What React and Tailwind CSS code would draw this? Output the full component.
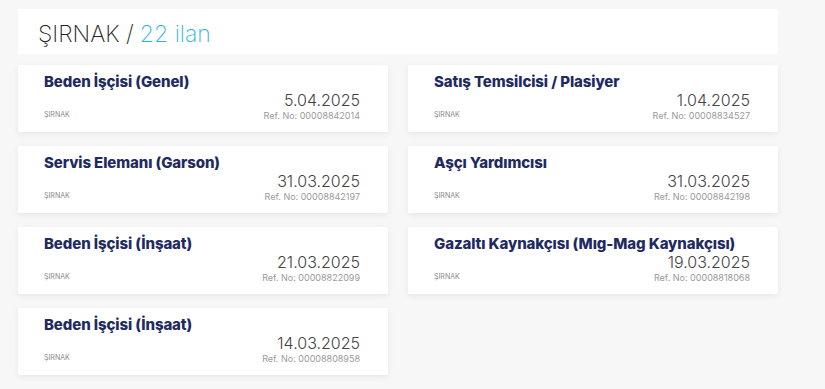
import React from 'react';

const jobs = [
  { title: 'Beden İşçisi (Genel)', date: '5.04.2025', ref: '00008842014' },
  { title: 'Satış Temsilcisi / Plasiyer', date: '1.04.2025', ref: '00008834527' },
  { title: 'Servis Elemanı (Garson)', date: '31.03.2025', ref: '00008842197' },
  { title: 'Aşçı Yardımcısı', date: '31.03.2025', ref: '00008842198' },
  { title: 'Beden İşçisi (İnşaat)', date: '21.03.2025', ref: '00008822099' },
  { title: 'Gazaltı Kaynakçısı (Mıg-Mag Kaynakçısı)', date: '19.03.2025', ref: '00008818068' },
  { title: 'Beden İşçisi (İnşaat)', date: '14.03.2025', ref: '00008808958' },
];

function JobCard({ job }) {
  return (
    <div className="h-[67px] bg-white rounded-[2px] shadow-[0_2px_6px_rgba(0,0,0,0.07)] pl-[26px] pr-[28px] pt-[8px] flex flex-col">
      <div className="text-[15px] leading-[18px] font-extrabold text-[#1e2a62] whitespace-nowrap tracking-[-0.1px]">{job.title}</div>
      <div className="flex justify-between items-end">
        <div className="text-[7px] leading-[10px] text-[#8a8a8a] mb-[3px]">ŞIRNAK</div>
        <div className="flex flex-col items-end">
          <div className="text-[16px] leading-[18px] font-light text-[#444]">{job.date}</div>
          <div className="text-[9px] leading-[14px] text-[#9a9a9a]">Ref. No: {job.ref}</div>
        </div>
      </div>
    </div>
  );
}

export default function App() {
  return (
    <div className="min-h-[389px] bg-[#f7f7f7] pt-[9px] px-[18px]" style={{ fontFamily: 'Inter, "Noto Sans", sans-serif' }}>
      <div className="w-[760px]">
        <div className="h-[45px] bg-white pl-[20px] pt-[6px] flex items-center">
          <span className="text-[23px] font-extralight text-[#222]">ŞIRNAK /</span>
          <span className="text-[23px] font-extralight text-[#2cb5e0] ml-[6px]">22 ilan</span>
        </div>
        <div className="grid grid-cols-2 gap-x-[20px] gap-y-[14px] mt-[11px]">
          {jobs.map((job, i) => (
            <JobCard key={i} job={job} />
          ))}
        </div>
      </div>
    </div>
  );
}
